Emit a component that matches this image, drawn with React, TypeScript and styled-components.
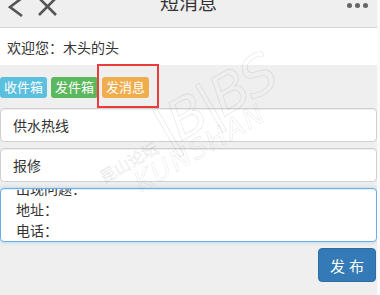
import React, { useEffect, useRef } from 'react';
import styled, { createGlobalStyle } from 'styled-components';

const GlobalStyle = createGlobalStyle`
  html, body {
    margin: 0;
    padding: 0;
    background: #fafafa;
  }
  body {
    font-family: "Liberation Sans", "Noto Sans CJK SC", sans-serif;
    color: #333;
  }
  * {
    box-sizing: border-box;
  }
`;

const Page = styled.div`
  position: relative;
  width: 377px;
  height: 295px;
  background: #efefef;
  overflow: hidden;
`;

const Header = styled.header`
  height: 28px;
  overflow: hidden;
  border-bottom: 1px solid #d6d6d6;
  background: #efefef;
`;

const HeaderInner = styled.div`
  display: grid;
  grid-template-columns: 1fr auto 1fr;
  align-items: center;
  height: 44px;
  margin-top: -17px;
`;

const NavLeft = styled.div`
  display: flex;
  align-items: center;
  gap: 12px;
  padding-left: 8px;
`;

const NavRight = styled.div`
  display: flex;
  justify-content: flex-end;
  align-items: center;
  gap: 3px;
  padding-right: 9px;
`;

const Dot = styled.span`
  width: 5px;
  height: 5px;
  border-radius: 50%;
  background: #666;
`;

const Title = styled.h1`
  margin: -2px 0 0;
  font-size: 19px;
  font-weight: normal;
  color: #333;
  line-height: 44px;
`;

const Welcome = styled.div`
  display: flex;
  align-items: center;
  height: 37px;
  padding-left: 7px;
  background: #fff;
  font-size: 14px;
  color: #333;
`;

const TabRow = styled.div`
  display: flex;
  gap: 4px;
  padding-top: 12px;
`;

const TabWrap = styled.div`
  position: relative;
`;

const Tab = styled.button<{ $tone: string }>`
  width: 47px;
  height: 21px;
  padding: 0;
  border: none;
  border-radius: 3px;
  background: ${({ $tone }) => $tone};
  color: #fff;
  font-family: inherit;
  font-size: 13px;
  line-height: 21px;
  cursor: pointer;
`;

const Highlight = styled.span`
  position: absolute;
  left: -5px;
  top: -13px;
  width: 62px;
  height: 44px;
  border: 2px solid #ec3b3b;
  pointer-events: none;
`;

const Form = styled.form`
  display: flex;
  flex-direction: column;
  gap: 6px;
  margin-top: 10px;
`;

const Field = styled.input`
  width: 100%;
  height: 34px;
  padding: 0 12px;
  border: 1px solid #cfcfcf;
  border-radius: 4px;
  background: #fff;
  box-shadow: inset 0 1px 1px rgba(0, 0, 0, 0.075);
  font-family: inherit;
  font-size: 14px;
  color: #333;
  outline: none;
`;

const Area = styled.textarea`
  width: 100%;
  height: 54px;
  padding: 6px 15px;
  border: 1px solid #66afe9;
  border-radius: 4px;
  background: #fff;
  box-shadow: inset 0 1px 1px rgba(0, 0, 0, 0.075), 0 0 4px rgba(102, 175, 233, 0.5);
  font-family: inherit;
  font-size: 14px;
  line-height: 21px;
  color: #333;
  resize: none;
  outline: none;
  overflow: hidden;
  scrollbar-width: none;
`;

const Actions = styled.div`
  display: flex;
  justify-content: flex-end;
  padding-right: 1px;
`;

const Submit = styled.button`
  width: 58px;
  height: 34px;
  border: 1px solid #2e6da4;
  border-radius: 4px;
  background: #337ab7;
  color: #fff;
  font-family: inherit;
  font-size: 15px;
  cursor: pointer;
`;

const Watermark = styled.div`
  position: absolute;
  left: 80px;
  top: 88px;
  width: 240px;
  height: 120px;
  pointer-events: none;
  transform: rotate(-30deg);
  transform-origin: center;
  display: flex;
  flex-direction: column;
  align-items: center;
  color: transparent;
  -webkit-text-stroke: 0.6px rgba(0, 0, 0, 0.12);
  font-family: "DejaVu Sans", "Noto Sans CJK SC", sans-serif;
`;

const MarkTop = styled.div`
  display: flex;
  align-items: flex-end;
  gap: 8px;
`;

const MarkCn = styled.span`
  font-size: 16px;
  margin-bottom: 6px;
`;

const MarkBbs = styled.span`
  font-size: 54px;
  font-style: italic;
  letter-spacing: -3px;
  line-height: 54px;
`;

const MarkEn = styled.span`
  font-size: 27px;
  font-style: italic;
  letter-spacing: 2px;
  margin-top: -10px;
`;

const BackIcon = () => (
  <svg width="16" height="28" viewBox="0 0 16 28">
    <polyline points="14,7 2,16 14,25" fill="none" stroke="#555" strokeWidth="2.6" />
  </svg>
);

const CloseIcon = () => (
  <svg width="24" height="28" viewBox="0 0 24 28">
    <path d="M3 7 L20 24 M20 7 L3 24" fill="none" stroke="#555" strokeWidth="2.6" />
  </svg>
);

const tabs = [
  { label: '收件箱', tone: '#5bc0de' },
  { label: '发件箱', tone: '#5cb85c' },
  { label: '发消息', tone: '#f0ad4e', active: true },
];

export default function App() {
  const areaRef = useRef<HTMLTextAreaElement>(null);

  useEffect(() => {
    // the textarea in the shot is scrolled a little
    if (areaRef.current) areaRef.current.scrollTop = 16;
  }, []);

  return (
    <>
      <GlobalStyle />
      <Page>
        <Header>
          <HeaderInner>
            <NavLeft>
              <BackIcon />
              <CloseIcon />
            </NavLeft>
            <Title>短消息</Title>
            <NavRight>
              <Dot />
              <Dot />
              <Dot />
            </NavRight>
          </HeaderInner>
        </Header>

        <Welcome>欢迎您：木头的头</Welcome>

        <TabRow>
          {tabs.map(tab => (
            <TabWrap key={tab.label}>
              <Tab type="button" $tone={tab.tone}>
                {tab.label}
              </Tab>
              {tab.active && <Highlight />}
            </TabWrap>
          ))}
        </TabRow>

        <Form onSubmit={e => e.preventDefault()}>
          <Field defaultValue="供水热线" />
          <Field defaultValue="报修" />
          <Area ref={areaRef} defaultValue={'出现问题：\n地址：\n电话：\n'} />
          <Actions>
            <Submit type="submit">发 布</Submit>
          </Actions>
        </Form>

        <Watermark>
          <MarkTop>
            <MarkCn>昆山论坛</MarkCn>
            <MarkBbs>|B|BS</MarkBbs>
          </MarkTop>
          <MarkEn>KUNSHAN</MarkEn>
        </Watermark>
      </Page>
    </>
  );
}
